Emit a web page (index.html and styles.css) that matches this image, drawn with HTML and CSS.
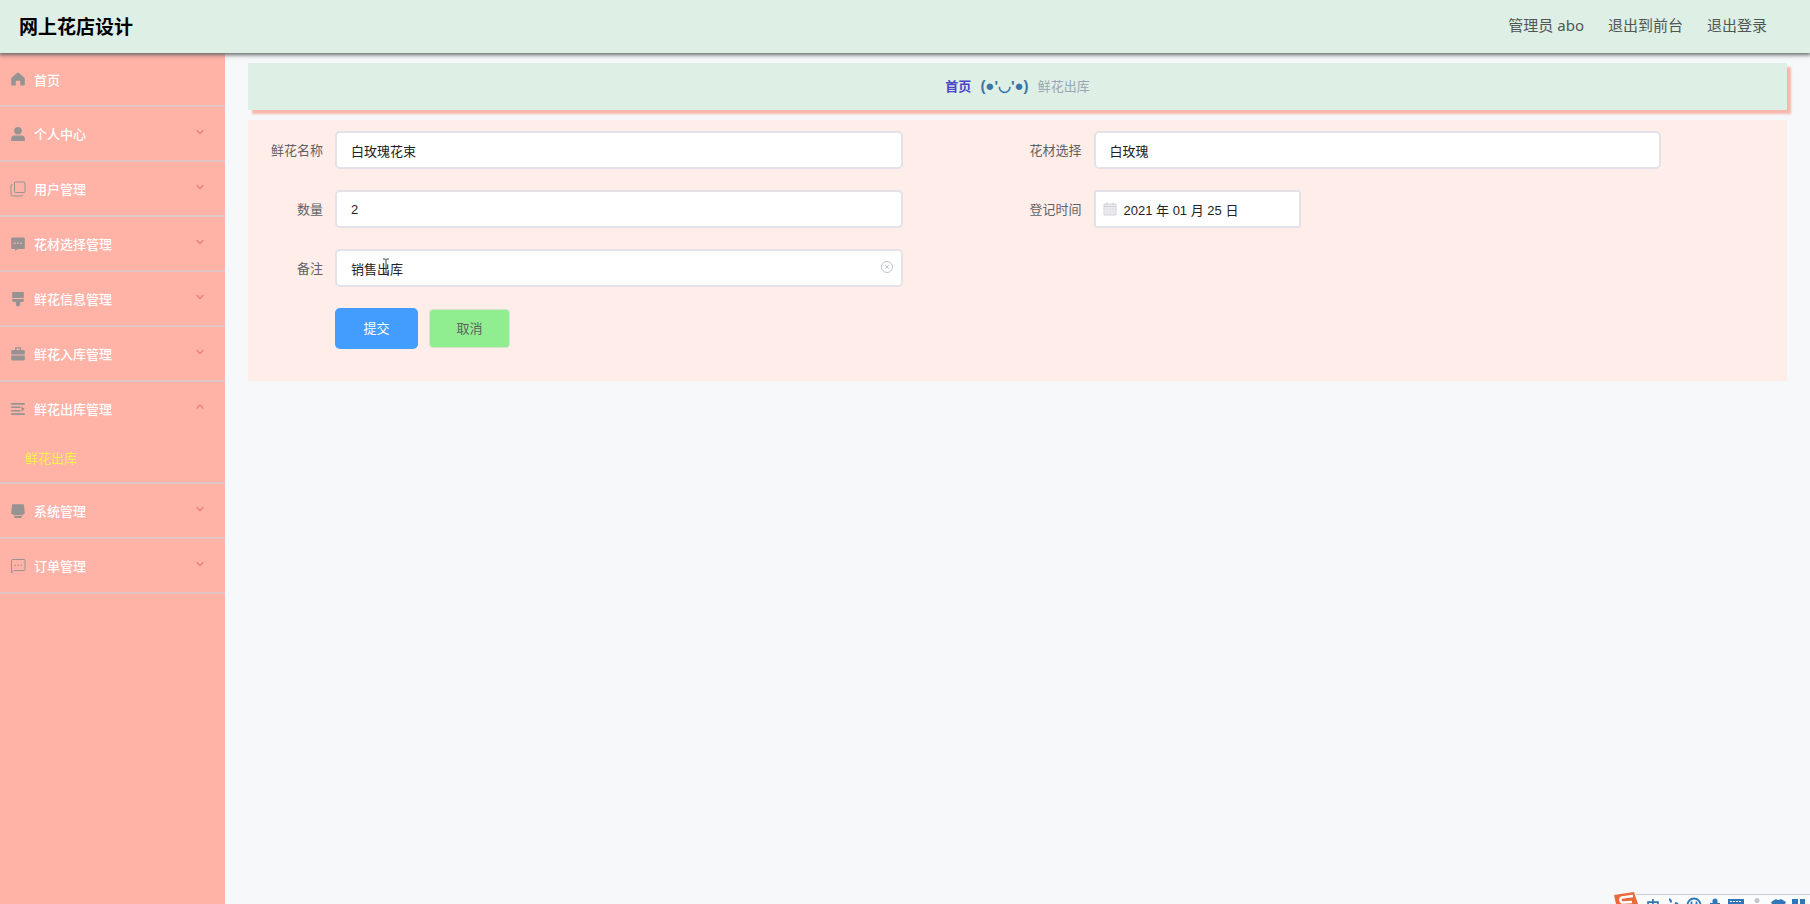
FILE: index.html
```html
<!DOCTYPE html>
<html lang="zh-CN">
<head>
<meta charset="utf-8">
<title>网上花店设计</title>
<link rel="stylesheet" href="styles.css">
</head>
<body>
<header class="topbar">
  <h1 class="brand">网上花店设计</h1>
  <nav class="account">
    <span>管理员 abo</span>
    <a href="#">退出到前台</a>
    <a href="#">退出登录</a>
  </nav>
</header>
<div class="layout">
  <aside class="sidebar">
    <ul class="menu">
      <li class="menu-item first"><button class="menu-btn" type="button">
        <svg class="icon" viewBox="0 0 16 16"><path d="M8 1.500Q7.500 1.500 7 2L1.200 7v6.500q0 1 1 1h3.600V9.800h4.400v4.700h3.600q1 0 1-1V7L9 2q-.5-.5-1-.5z"/></svg>
        <span>首页</span></button></li>
      <li class="menu-item"><button class="menu-btn" type="button">
        <svg class="icon" viewBox="0 0 16 16"><circle cx="8" cy="4.800" r="3.800"/><path d="M1.200 15v-2.200c0-2 1.200-3.200 3.200-3.200h7.200c2 0 3.200 1.200 3.200 3.200V15z"/></svg>
        <span>个人中心</span>
        <svg class="chev" viewBox="0 0 10 10"><path d="m1.500 3 3.500 3.500L8.500 3"/></svg></button></li>
      <li class="menu-item"><button class="menu-btn" type="button">
        <svg class="icon line" viewBox="0 0 16 16"><rect x="4.500" y="1" width="10.500" height="10.500" rx="1"/><path d="M2.500 3.500Q1 3.500 1 5v8.500Q1 15 2.500 15H11q1.500 0 1.500-1.300"/></svg>
        <span>用户管理</span>
        <svg class="chev" viewBox="0 0 10 10"><path d="m1.500 3 3.500 3.500L8.500 3"/></svg></button></li>
      <li class="menu-item"><button class="menu-btn" type="button">
        <svg class="icon" viewBox="0 0 16 16"><path fill-rule="evenodd" d="M2.200 1.500h11.600q1 0 1 1v9.500q0 1-1 1H8L5 15v-2H2.200q-1 0-1-1V2.500q0-1 1-1zM4 6.500V8h1.500V6.500zm3.200 0V8h1.500V6.500zm3.200 0V8h1.500V6.500z"/></svg>
        <span>花材选择管理</span>
        <svg class="chev" viewBox="0 0 10 10"><path d="m1.500 3 3.500 3.500L8.500 3"/></svg></button></li>
      <li class="menu-item"><button class="menu-btn" type="button">
        <svg class="icon" viewBox="0 0 16 16"><path d="M3 1h10q.8 0 .8.800V7H2.200V1.800Q2.200 1 3 1zM2.200 8h11.600v1.500q0 1.500-1.500 1.500h-2.100v2.500Q10 15.500 8 15.500t-2.200-2V11H3.700q-1.500 0-1.500-1.500z"/></svg>
        <span>鲜花信息管理</span>
        <svg class="chev" viewBox="0 0 10 10"><path d="m1.500 3 3.500 3.500L8.500 3"/></svg></button></li>
      <li class="menu-item"><button class="menu-btn" type="button">
        <svg class="icon" viewBox="0 0 16 16"><path fill-rule="evenodd" d="M5 4V2q0-.8.800-.8h4.400q.8 0 .8.800v2h3q.8 0 .8.800v3.700H1.200V4.800Q1.200 4 2 4zm1.300 0h3.400V2.500H6.300zM1.200 9.500h13.600v4q0 1-1 1H2.200q-1 0-1-1z"/></svg>
        <span>鲜花入库管理</span>
        <svg class="chev" viewBox="0 0 10 10"><path d="m1.500 3 3.500 3.500L8.500 3"/></svg></button></li>
      <li class="menu-item"><button class="menu-btn" type="button" aria-expanded="true">
        <svg class="icon" viewBox="0 0 16 16"><path d="M1.200 2h13.600v1.800H1.200zM1.200 5.500h9.300v1.600H1.200zM1.200 8.900h9.300v1.600H1.200zM1.200 12.200h13.600V14H1.200zM11.500 5.500 14.800 8l-3.300 2.500z"/></svg>
        <span>鲜花出库管理</span>
        <svg class="chev" viewBox="0 0 10 10"><path d="M1.500 6.500 5 3l3.500 3.500"/></svg></button>
        <a class="submenu-link" href="#">鲜花出库</a></li>
      <li class="menu-item"><button class="menu-btn" type="button">
        <svg class="icon" viewBox="0 0 16 16"><path d="M3 1.200h10q.9 0 1 .9l.8 7.900q0 1.300-1.300 1.300h-11Q1.200 11.300 1.200 10L2 2.100q.1-.9 1-.9zM3.200 11.300h9.600v1H3.200zM4 13h8l-.5 2h-7z"/></svg>
        <span>系统管理</span>
        <svg class="chev" viewBox="0 0 10 10"><path d="m1.500 3 3.500 3.500L8.500 3"/></svg></button></li>
      <li class="menu-item"><button class="menu-btn" type="button">
        <svg class="icon line" viewBox="0 0 16 16"><path d="M2.500 1.500H14q1 0 1 1v9q0 1-1 1H4L1.500 15V2.500q0-1 1-1z"/><path d="M4.500 7.300H6M7.500 7.300H9M10.500 7.300H12"/></svg>
        <span>订单管理</span>
        <svg class="chev" viewBox="0 0 10 10"><path d="m1.500 3 3.500 3.500L8.500 3"/></svg></button></li>
    </ul>
  </aside>
  <main class="content">
    <nav class="breadcrumb">
      <a href="#">首页</a>
      <span class="face">(●'◡'●)</span>
      <span class="current">鲜花出库</span>
    </nav>
    <form class="panel">
      <div class="field"><label for="name">鲜花名称</label><input id="name" type="text" value="白玫瑰花束"></div>
      <div class="field"><label for="material">花材选择</label><input id="material" type="text" value="白玫瑰"></div>
      <div class="field"><label for="count">数量</label><input id="count" type="text" value="2"></div>
      <div class="field"><label for="date">登记时间</label>
        <div class="date-box">
          <input id="date" type="text" value="2021 年 01 月 25 日">
          <svg class="calendar" viewBox="0 0 14 14"><path d="M1 2h12v11H1z" fill="#ebebef" stroke="#d3d4da"/><path d="M1 4.500h12M4 .5v2.500M10 .5v2.500" stroke="#cfd0d6" fill="none"/><path d="M3 7h8M3 10h8" stroke="#dcdde2" stroke-dasharray="2 1"/></svg>
        </div>
      </div>
      <div class="field"><label for="remark">备注</label>
        <div class="clear-box">
          <input id="remark" type="text" value="销售出库">
          <button class="clear" type="button" aria-label="清空"><svg viewBox="0 0 14 14"><circle cx="7" cy="7" r="5.500"/><path d="m5.200 5.200 3.600 3.600m0-3.600L5.200 8.800"/></svg></button>
          <svg class="cursor" viewBox="0 0 8 16"><path d="M1 1h2.500L4 1.500 4.500 1H7M4 1.500v13M1 15h2.500l.5-.5.5.5H7"/></svg>
        </div>
      </div>
      <div class="actions">
        <button class="submit" type="submit">提交</button>
        <button class="cancel" type="button">取消</button>
      </div>
    </form>
  </main>
</div>
<svg class="ime" viewBox="0 0 196 14" aria-hidden="true">
  <path d="M20 5.500h176V14H20z" fill="#fbfcfd"/><path d="M22 4.500h174" stroke="#c9ccd1"/>
  <path d="m0 5 20-3 4 12H2z" fill="#ea6a3d"/><path d="M19 6 8 7.500q-2 .5-1.500 3t3 2L18 12" fill="none" stroke="#fff" stroke-width="2.500"/>
  <text x="32" y="21" class="ime-text">中</text>
  <path d="M55 9.500q2 0 2 3M61 13l3 1" stroke="#2f77b8" stroke-width="2" fill="none"/>
  <circle cx="80" cy="15" r="6.500" fill="none" stroke="#2f77b8" stroke-width="1.800"/><path d="M77.500 11.500V14M82.500 11.500V14" stroke="#2f77b8" stroke-width="1.800"/>
  <path d="M98.500 14v-3q0-2.500 2.500-2.500t2.500 2.500v3zM96 13h10v1H96z" fill="#2f77b8"/>
  <path d="M114 9h16v5h-16z" fill="#2f77b8"/><path d="M116 11.500h12" stroke="#fff" stroke-dasharray="2 1"/>
  <circle cx="143" cy="10.500" r="2.500" fill="#c2c6ce"/>
  <path d="m157 12 5-3q2 2 5 0l5 3-1 2h-13z" fill="#2f77b8"/>
  <path d="M178 9h6v5h-6zM186 9h5v5h-5z" fill="#2f77b8"/>
</svg>
</body>
</html>
```

FILE: styles.css
```css
* {
  box-sizing: border-box;
}

body {
  margin: 0;
  min-height: 100vh;
  display: flex;
  flex-direction: column;
  background: #f6f8fa;
  font-family: "Liberation Sans", "Noto Sans CJK SC", sans-serif;
  font-size: 13px;
  color: #606266;
}

a {
  color: inherit;
  text-decoration: none;
}

button,
input {
  font: inherit;
}

.topbar {
  position: relative;
  z-index: 1;
  display: flex;
  align-items: center;
  justify-content: space-between;
  height: 53px;
  padding: 0 43px 3px 19px;
  background: #deefe6;
  box-shadow: 0 1px 4px 1px #666;
}

.brand {
  margin: 0;
  font-size: 19px;
  font-weight: 700;
  color: #000;
}

.account {
  display: flex;
  gap: 24px;
  font-family: "Noto Sans", "Noto Sans CJK SC", sans-serif;
  font-size: 15px;
  line-height: 22px;
  color: #4f5753;
}

.layout {
  display: flex;
  flex: 1;
}

.sidebar {
  width: 225px;
  flex-shrink: 0;
  background: #ffb2a6;
}

.menu {
  margin: 0;
  padding: 0;
  list-style: none;
}

.menu-item {
  border-bottom: 2px solid #e2c6c3;
}

.menu-btn {
  display: flex;
  align-items: center;
  gap: 8px;
  width: 100%;
  height: 53px;
  padding: 0 20px 0 10px;
  border: 0;
  background: none;
  color: #fff;
  font-weight: 500;
  text-align: left;
}

.first .menu-btn {
  height: 52px;
}

.icon {
  width: 16px;
  height: 16px;
  fill: #979393;
}

.icon.line {
  fill: none;
  stroke: #979393;
}

.chev {
  width: 10px;
  height: 10px;
  margin: 0 0 3px auto;
  fill: none;
  stroke: #ec7f7f;
  stroke-width: 1.3;
}

.submenu-link {
  display: block;
  height: 47px;
  padding-left: 25px;
  line-height: 47px;
  color: #fbf04a;
}

.content {
  flex: 1;
  padding: 10px 23px 0 23px;
}

.breadcrumb {
  display: flex;
  align-items: center;
  justify-content: center;
  gap: 9px;
  height: 47px;
  margin-bottom: 10px;
  padding-bottom: 2px;
  background: #deefe6;
  box-shadow: 4px 4px 2px #f9b8ae;
  color: #9aa5b5;
}

.breadcrumb a {
  font-weight: 700;
  color: #4a45c4;
}

.face {
  font-size: 15px;
  font-weight: 700;
  color: #3b75a8;
}

.panel {
  display: grid;
  grid-template-columns: 1fr 1fr;
  row-gap: 21px;
  padding: 11px 12px 32px 10px;
  background: #ffede9;
}

.field {
  display: flex;
  align-items: center;
  padding-right: 15%;
}

.field label {
  width: 77px;
  padding: 0 12px 2px 0;
  text-align: right;
}

.field input {
  flex: 1;
  width: 100%;
  height: 38px;
  padding: 0 14px;
  border: 2px solid #e2e2e8;
  border-radius: 5px;
  background: #fff;
  color: #222;
}

.date-box,
.clear-box {
  position: relative;
  display: flex;
  flex: 1;
}

.date-box {
  flex: 0 0 207px;
}

.field .date-box input {
  padding-left: 28px;
  border-radius: 3px;
}

.calendar {
  position: absolute;
  left: 9px;
  top: 12px;
  width: 14px;
  height: 14px;
}

.clear {
  position: absolute;
  right: 9px;
  top: 11px;
  width: 14px;
  height: 14px;
  padding: 0;
  border: 0;
  background: none;
}

.clear svg {
  display: block;
  fill: none;
  stroke: #c0c4cc;
}

.cursor {
  position: absolute;
  left: 47px;
  top: 8px;
  width: 8px;
  height: 18px;
  fill: none;
  stroke: #444;
}

.actions {
  grid-column: 1 / -1;
  display: flex;
  align-items: center;
  gap: 11px;
  padding-left: 77px;
}

.submit,
.cancel {
  width: 83px;
  height: 41px;
  padding: 0 0 2px;
  border: 0;
  border-radius: 5px;
  background: #429dff;
  color: #fff;
}

.cancel {
  width: 81px;
  height: 39px;
  border: 1px solid #d4e6d2;
  border-radius: 4px;
  background: #90ee90;
  color: #5b665d;
}

.ime {
  position: fixed;
  right: 0;
  bottom: 0;
  width: 196px;
  height: 14px;
}

.ime-text {
  font-size: 14px;
  font-weight: 700;
  fill: #2f77b8;
}
```
